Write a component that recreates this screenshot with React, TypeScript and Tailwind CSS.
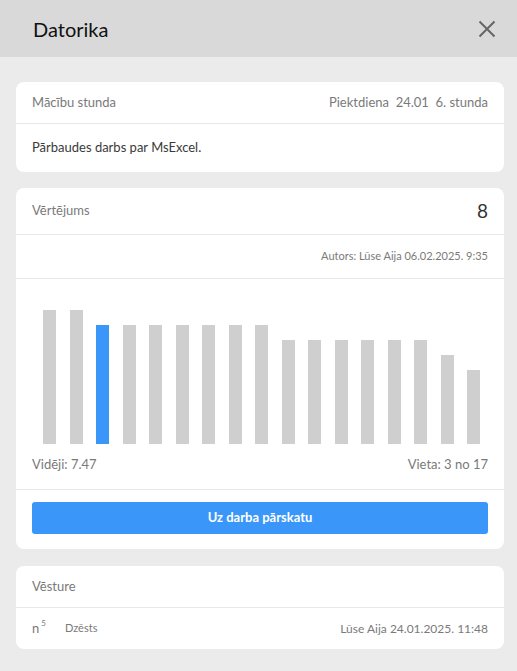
import React from "react";

const bars = [134, 134, 119, 119, 119, 119, 119, 119, 119, 104, 104, 104, 104, 104, 104, 89, 74];

export default function App() {
  return (
    <div
      className="w-[517px] h-[671px] bg-[#ebebeb] flex flex-col overflow-hidden"
      style={{ fontFamily: "Lato, 'Noto Sans', sans-serif" }}
    >
      <div className="h-[57px] bg-[#d9d9d9] flex items-center justify-between pl-[33px] pr-[21px] shrink-0">
        <div className="text-[20px] text-[#111] leading-none">Datorika</div>
        <svg width="18" height="18" viewBox="0 0 18 18" className="block">
          <path d="M1.5 1.5 L16.5 16.5 M16.5 1.5 L1.5 16.5" stroke="#666" strokeWidth="2" strokeLinecap="butt" />
        </svg>
      </div>

      <div className="flex flex-col pl-4 pr-[13px] pt-[25px]">
        {/* Card 1 */}
        <div className="bg-white rounded-lg">
          <div className="h-[42px] flex items-center justify-between px-4 border-b border-[#e8e8e8] text-[13px] text-[#7a7a7a]">
            <span>Mācību stunda</span>
            <span className="whitespace-pre">Piektdiena  24.01  6. stunda</span>
          </div>
          <div className="h-[48px] flex items-center px-4 text-[13px] text-[#3a3a3a]">
            Pārbaudes darbs par MsExcel.
          </div>
        </div>

        {/* Card 2 */}
        <div className="bg-white rounded-lg mt-4">
          <div className="h-[47px] flex items-center justify-between px-4 border-b border-[#e8e8e8]">
            <span className="text-[13px] text-[#7a7a7a]">Vērtējums</span>
            <span className="text-[19px] text-[#333]">8</span>
          </div>
          <div className="h-[44px] flex items-center justify-end px-4 border-b border-[#e8e8e8] text-[11px] text-[#7a7a7a]">
            Autors: Lūse Aija 06.02.2025. 9:35
          </div>
          <div className="pt-[31px] pl-[27px] pr-[24px]">
            <div className="h-[134px] flex items-end justify-between">
              {bars.map((h, i) => (
                <div
                  key={i}
                  className={i === 2 ? "w-[13px] bg-[#3a97f9]" : "w-[13px] bg-[#cfcfcf]"}
                  style={{ height: h }}
                />
              ))}
            </div>
          </div>
          <div className="h-[46px] flex items-center justify-between px-4 pb-[3px] border-b border-[#e8e8e8] text-[13px] text-[#7a7a7a]">
            <span>Vidēji: 7.47</span>
            <span>Vieta: 3 no 17</span>
          </div>
          <div className="px-4 pt-3 pb-[15px]">
            <div className="h-8 rounded-[3px] bg-[#3a97f9] flex items-center justify-center text-white text-[13px] font-bold">
              Uz darba pārskatu
            </div>
          </div>
        </div>

        {/* Card 3 */}
        <div className="bg-white rounded-lg mt-[17px]">
          <div className="h-[42px] flex items-center px-4 border-b border-[#e8e8e8] text-[13px] text-[#7a7a7a]">
            Vēsture
          </div>
          <div className="h-[41px] flex items-center px-4 text-[#7a7a7a]">
            <span className="w-[33px] flex items-start">
              <span className="text-[13px] leading-none">n</span>
              <span className="text-[8px] leading-none ml-[2px] -mt-[3px]">5</span>
            </span>
            <span className="text-[11px]">Dzēsts</span>
            <span className="ml-auto text-[12px]">Lūse Aija 24.01.2025. 11:48</span>
          </div>
        </div>
      </div>
    </div>
  );
}
